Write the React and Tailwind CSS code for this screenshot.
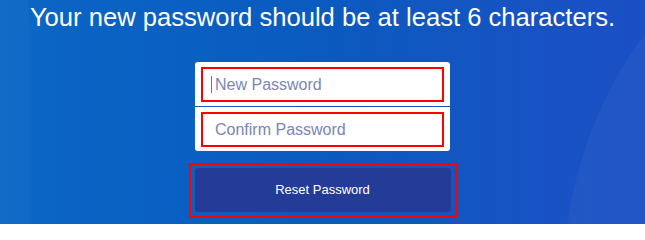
import React from 'react';

const font = { fontFamily: '"Liberation Sans", Arial, sans-serif' };

function Field({ placeholder, caret, rounded }) {
  return (
    <div className={`bg-white h-[44px] px-[6px] pt-[5px] ${rounded}`}>
      <div className="relative h-[35px] border-2 border-[#ff0000]">
        {caret && <span className="absolute left-[8px] top-[7px] w-px h-[17px] bg-[#6b74a8]" />}
        <input
          type="password"
          placeholder={placeholder}
          className="w-full h-full bg-transparent outline-none pl-[12px] text-[16px] text-[#333] placeholder:text-[#7b85b5]"
          style={font}
        />
      </div>
    </div>
  );
}

export default function App() {
  return (
    <div
      className="relative w-[645px] h-[224px] overflow-hidden bg-gradient-to-r from-[#0b67c6] via-[#0a5abf] to-[#1b4fc5]"
      style={font}
    >
      {/* soft background arcs */}
      <div className="absolute -left-[440px] -top-[200px] w-[470px] h-[700px] rounded-full bg-white/[0.03]" />
      <div className="absolute left-[564px] -top-[131px] w-[818px] h-[818px] rounded-full bg-white/[0.04]" />

      <div className="relative flex flex-col items-center pt-1">
        <h1 className="text-[25.6px] leading-[26px] text-white">
          Your new password should be at least 6 characters.
        </h1>

        <div className="mt-[32px] w-[255px] flex flex-col gap-px">
          <Field placeholder="New Password" caret rounded="rounded-t-[3px]" />
          <Field placeholder="Confirm Password" rounded="rounded-b-[3px]" />
        </div>

        <div className="mt-[12px] border-2 border-[#ff0000] px-[4px] pt-[3px] pb-[4px]">
          <button className="w-[256px] h-[44px] rounded-[3px] bg-[#243c98] text-white text-[13px]">
            Reset Password
          </button>
        </div>
      </div>
    </div>
  );
}
